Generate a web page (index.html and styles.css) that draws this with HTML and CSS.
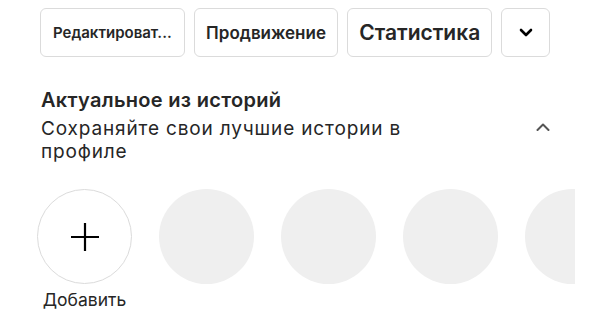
FILE: index.html
```html
<!DOCTYPE html>
<html lang="ru">
<head>
  <meta charset="UTF-8">
  <meta name="viewport" content="width=device-width, initial-scale=1.0">
  <title>Профиль</title>
  <link rel="stylesheet" href="styles.css">
</head>
<body>
  <div class="profile">
    <div class="actions">
      <button class="btn btn-edit">Редактироват...</button>
      <button class="btn btn-promo">Продвижение</button>
      <button class="btn btn-stats">Статистика</button>
      <button class="btn btn-more">
        <svg width="14" height="9" viewBox="0 0 14 9"><polyline points="2,2 7,7 12,2" fill="none" stroke="#000" stroke-width="2.6" stroke-linecap="round" stroke-linejoin="round"/></svg>
      </button>
    </div>

    <div class="highlights-head">
      <div class="highlights-text">
        <h3>Актуальное из историй</h3>
        <p>Сохраняйте свои лучшие истории в профиле</p>
      </div>
      <svg class="collapse" width="14" height="8" viewBox="0 0 14 8"><polyline points="1.5,7 7,1.5 12.5,7" fill="none" stroke="#555" stroke-width="2" stroke-linecap="round" stroke-linejoin="round"/></svg>
    </div>

    <div class="highlights">
      <div class="highlight">
        <div class="circle circle-add">
          <svg width="30" height="30" viewBox="0 0 30 30"><path d="M15 1v28M1 15h28" stroke="#000" stroke-width="2.2"/></svg>
        </div>
        <span class="label">Добавить</span>
      </div>
      <div class="highlight"><div class="circle"></div></div>
      <div class="highlight"><div class="circle"></div></div>
      <div class="highlight"><div class="circle"></div></div>
      <div class="highlight"><div class="circle"></div></div>
    </div>
  </div>
</body>
</html>
```

FILE: styles.css
```css
body {
  margin: 0;
  background: #fff;
  font-family: Inter, "Liberation Sans", Arial, sans-serif;
  color: #262626;
}
.profile {
  padding: 8px 41px 0 40px;
}
.actions {
  display: flex;
  gap: 9px;
}
.btn {
  height: 49px;
  width: 145px;
  padding: 0;
  background: #fff;
  border: 1px solid #dbdbdb;
  border-radius: 6px;
  font-family: inherit;
  font-weight: 600;
  color: #262626;
  display: flex;
  align-items: center;
  justify-content: center;
}
.btn-edit {
  font-size: 15px;
}
.btn-promo {
  font-size: 17px;
}
.btn-stats {
  font-size: 21px;
}
.btn-more {
  width: 49px;
}
.highlights-head {
  display: flex;
  justify-content: space-between;
  align-items: flex-start;
  margin-top: 32px;
}
.highlights-text {
  width: 410px;
  padding-left: 1px;
}
.highlights-text h3 {
  margin: 0;
  font-size: 20px;
  line-height: 22px;
  font-weight: 600;
  letter-spacing: 0.3px;
}
.highlights-text p {
  margin: 6px 0 0;
  font-size: 19px;
  line-height: 23px;
  letter-spacing: 0.85px;
}
.collapse {
  margin-top: 34px;
}
.highlights {
  display: flex;
  gap: 27px;
  margin: 26px 0 0 -3px;
  width: 538px;
  overflow: hidden;
}
.highlight {
  flex: 0 0 95px;
  display: flex;
  flex-direction: column;
  align-items: center;
}
.circle {
  width: 95px;
  height: 95px;
  border-radius: 50%;
  background: #efefef;
  box-sizing: border-box;
}
.circle-add {
  background: #fff;
  border: 1px solid #dbdbdb;
  display: flex;
  align-items: center;
  justify-content: center;
}
.label {
  margin-top: 6px;
  font-size: 17.5px;
  line-height: 20px;
}
```
